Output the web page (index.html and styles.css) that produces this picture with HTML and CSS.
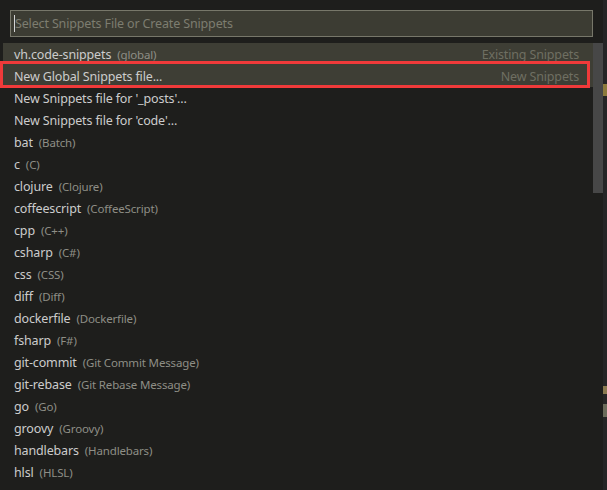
FILE: index.html
```html
<!DOCTYPE html>
<html>
<head>
<meta charset="utf-8">
<link rel="stylesheet" href="styles.css">
</head>
<body>
<div class="screen">
  <div class="widget">
    <div class="input-wrap">
      <div class="input"><span class="caret"></span><span class="placeholder">Select Snippets File or Create Snippets</span></div>
    </div>
    <div class="list">
      <div class="rows">
        <div class="row hl"><span class="label">vh.code-snippets</span><span class="desc">(global)</span><span class="detail">Existing Snippets</span></div>
        <div class="row hl"><span class="label">New Global Snippets file...</span><span class="detail">New Snippets</span></div>
        <div class="row"><span class="label">New Snippets file for '_posts'...</span></div>
        <div class="row"><span class="label">New Snippets file for 'code'...</span></div>
        <div class="row"><span class="label">bat</span><span class="desc">(Batch)</span></div>
        <div class="row"><span class="label">c</span><span class="desc">(C)</span></div>
        <div class="row"><span class="label">clojure</span><span class="desc">(Clojure)</span></div>
        <div class="row"><span class="label">coffeescript</span><span class="desc">(CoffeeScript)</span></div>
        <div class="row"><span class="label">cpp</span><span class="desc">(C++)</span></div>
        <div class="row"><span class="label">csharp</span><span class="desc">(C#)</span></div>
        <div class="row"><span class="label">css</span><span class="desc">(CSS)</span></div>
        <div class="row"><span class="label">diff</span><span class="desc">(Diff)</span></div>
        <div class="row"><span class="label">dockerfile</span><span class="desc">(Dockerfile)</span></div>
        <div class="row"><span class="label">fsharp</span><span class="desc">(F#)</span></div>
        <div class="row"><span class="label">git-commit</span><span class="desc">(Git Commit Message)</span></div>
        <div class="row"><span class="label">git-rebase</span><span class="desc">(Git Rebase Message)</span></div>
        <div class="row"><span class="label">go</span><span class="desc">(Go)</span></div>
        <div class="row"><span class="label">groovy</span><span class="desc">(Groovy)</span></div>
        <div class="row"><span class="label">handlebars</span><span class="desc">(Handlebars)</span></div>
        <div class="row"><span class="label">hlsl</span><span class="desc">(HLSL)</span></div>
      </div>
      <div class="scrollbar"><div class="thumb"></div></div>
      <div class="annot"></div>
    </div>
  </div>
  <div class="behind">
    <span class="bit b1"></span>
    <span class="bit b2"></span>
    <span class="bit b3"></span>
  </div>
</div>
</body>
</html>
```

FILE: styles.css
```css
html, body {
  margin: 0;
  padding: 0;
  background: #1e1e1e;
}
.screen {
  display: flex;
  width: 607px;
  height: 490px;
  overflow: hidden;
  font-family: "Noto Sans", "Open Sans", sans-serif;
  font-size: 12.5px;
  letter-spacing: -0.15px;
}
.widget {
  width: 603px;
  background: #1e1e1c;
  box-sizing: border-box;
  padding-top: 10px;
}
.input-wrap {
  padding: 0 10px 0 10px;
}
.input {
  height: 27px;
  box-sizing: border-box;
  border: 1px solid #77776a;
  background: #3c3c33;
  display: flex;
  align-items: center;
  padding-left: 3px;
}
.caret {
  width: 1px;
  height: 17px;
  background: #d4d4d4;
}
.placeholder {
  color: #7d7d70;
}
.list {
  margin-top: 6px;
  position: relative;
  display: flex;
}
.rows {
  width: 590px;
  margin-left: 3px;
}
.row {
  height: 22px;
  display: flex;
  align-items: center;
  padding-left: 11px;
  padding-right: 14px;
  white-space: nowrap;
}
.row.hl {
  background: #3e3e35;
}
.label {
  color: #cccccc;
}
.desc {
  color: #8e8e86;
  font-size: 11.5px;
  margin-left: 6px;
}
.detail {
  margin-left: auto;
  color: #6f6f62;
}
.scrollbar {
  width: 10px;
}
.thumb {
  height: 150px;
  background: #474747;
}
.annot {
  position: absolute;
  left: 0;
  top: 18px;
  width: 590px;
  height: 27px;
  box-sizing: border-box;
  border: 3px solid #f03a3a;
}
.behind {
  width: 4px;
  background: #252526;
  position: relative;
}
.bit {
  position: absolute;
  left: 0;
  width: 4px;
}
.b1 { top: 84px; height: 12px; background: #8c7a3c; }
.b2 { top: 386px; height: 8px; background: #8a7a50; }
.b3 { top: 404px; height: 13px; background: #6b6b5a; }
```
